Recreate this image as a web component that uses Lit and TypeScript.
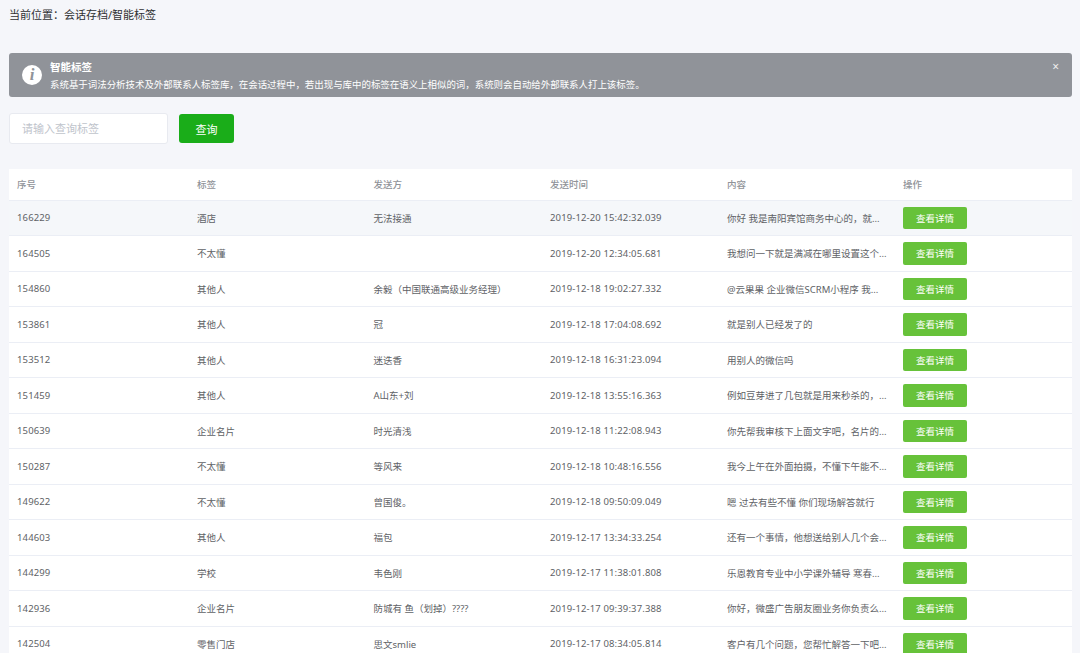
import { html, css, LitElement } from 'lit';
import { customElement } from 'lit/decorators.js';

// full-width punctuation, written as escapes so it can't get flattened to ascii
const C = '\uFF0C';
const COLON = '\uFF1A';
const LP = '\uFF08';
const RP = '\uFF09';

const crumb = `当前位置${COLON}会话存档/智能标签`;
const desc = `系统基于词法分析技术及外部联系人标签库${C}在会话过程中${C}若出现与库中的标签在语义上相似的词${C}系统则会自动给外部联系人打上该标签。`;

const rows = [
  ['166229', '酒店', '无法接通', '2019-12-20 15:42:32.039', `你好 我是南阳宾馆商务中心的${C}就...`],
  ['164505', '不太懂', '', '2019-12-20 12:34:05.681', '我想问一下就是满减在哪里设置这个...'],
  ['154860', '其他人', `余毅${LP}中国联通高级业务经理${RP}`, '2019-12-18 19:02:27.332', '@云果果 企业微信SCRM小程序 我...'],
  ['153861', '其他人', '冠', '2019-12-18 17:04:08.692', '就是别人已经发了的'],
  ['153512', '其他人', '迷迭香', '2019-12-18 16:31:23.094', '用别人的微信吗'],
  ['151459', '其他人', 'A山东+刘', '2019-12-18 13:55:16.363', `例如豆芽进了几包就是用来秒杀的${C}...`],
  ['150639', '企业名片', '时光清浅', '2019-12-18 11:22:08.943', `你先帮我审核下上面文字吧${C}名片的...`],
  ['150287', '不太懂', '等风来', '2019-12-18 10:48:16.556', `我今上午在外面拍摄${C}不懂下午能不...`],
  ['149622', '不太懂', '曾国俊。', '2019-12-18 09:50:09.049', '嗯 过去有些不懂 你们现场解答就行'],
  ['144603', '其他人', '福包', '2019-12-17 13:34:33.254', `还有一个事情${C}他想送给别人几个会...`],
  ['144299', '学校', '韦色刚', '2019-12-17 11:38:01.808', '乐恩教育专业中小学课外辅导 寒春...'],
  ['142936', '企业名片', `防城有 鱼${LP}划掉${RP}????`, '2019-12-17 09:39:37.388', `你好${C}微盛广告朋友圈业务你负责么...`],
  ['142504', '零售门店', '思文smlie', '2019-12-17 08:34:05.814', `客户有几个问题${C}您帮忙解答一下吧...`],
];

@customElement('app-root')
export class AppRoot extends LitElement {
  render() {
    return html`
      <div class="crumb">${crumb}</div>

      <section class="alert">
        <span class="alert-icon">i</span>
        <div class="alert-body">
          <div class="alert-title">智能标签</div>
          <div class="alert-desc">${desc}</div>
        </div>
        <span class="alert-close">×</span>
      </section>

      <form class="search">
        <input class="search-input" placeholder="请输入查询标签" />
        <button class="search-btn" type="button">查询</button>
      </form>

      <section class="table">
        <div class="row head">
          <div>序号</div>
          <div>标签</div>
          <div>发送方</div>
          <div>发送时间</div>
          <div>内容</div>
          <div>操作</div>
        </div>
        ${rows.map(
          (r, i) => html`
            <div class="row ${i === 0 ? 'hover' : ''}">
              ${r.map(c => html`<div>${c}</div>`)}
              <div><button class="detail" type="button">查看详情</button></div>
            </div>
          `
        )}
      </section>
    `;
  }

  static styles = css`
    :host {
      display: block;
      height: 653px;
      overflow: hidden;
      box-sizing: border-box;
      padding: 0 8px 0 9px;
      background: #f5f6fa;
      font-family: 'Noto Sans', 'Noto Sans CJK SC', sans-serif;
      color: #606266;
    }

    .crumb {
      height: 53px;
      padding-top: 7px;
      box-sizing: border-box;
      font-size: 11px;
      line-height: 16px;
      color: #303133;
    }

    .alert {
      position: relative;
      display: flex;
      align-items: center;
      gap: 8px;
      height: 44px;
      padding-left: 13px;
      box-sizing: border-box;
      border-radius: 3px;
      background: #909399;
      color: #fff;
    }

    .alert-icon {
      flex: none;
      width: 20px;
      height: 20px;
      border-radius: 50%;
      background: #fff;
      color: #909399;
      font: italic bold 17px/20px 'Liberation Serif', serif;
      text-align: center;
    }

    .alert-body {
      padding-top: 2px;
    }

    .alert-title {
      font-size: 10.5px;
      font-weight: 700;
      line-height: 16px;
      margin-top: -1px;
    }

    .alert-desc {
      font-size: 9.45px;
      line-height: 14px;
      margin-top: 3px;
    }

    .alert-close {
      position: absolute;
      top: 7px;
      right: 13px;
      font-size: 12px;
      line-height: 14px;
      color: #eee;
    }

    .search {
      display: flex;
      align-items: center;
      gap: 12px;
      height: 31px;
      margin: 16px 0 25px;
    }

    .search-input {
      width: 159px;
      height: 31px;
      padding: 0 12px;
      box-sizing: border-box;
      border: 1px solid #e8eaf0;
      border-radius: 3px;
      background: #fff;
      font: inherit;
      font-size: 11px;
      outline: none;
    }

    .search-input::placeholder {
      color: #c0c4cc;
    }

    .search-btn {
      width: 55px;
      height: 29px;
      margin-left: -1px;
      padding: 0;
      border: 0;
      border-radius: 3px;
      background: #1aad19;
      color: #fff;
      font: inherit;
      font-size: 11px;
    }

    .table {
      background: #fff;
    }

    .row {
      display: grid;
      grid-template-columns: 180px 176.5px 176.5px 177px 176px 1fr;
      align-items: center;
      height: 35.5px;
      box-sizing: border-box;
      border-bottom: 1px solid #ebeef5;
      font-size: 9.5px;
    }

    .row > div {
      padding-left: 8px;
      white-space: nowrap;
      overflow: hidden;
    }

    .row:not(.head) > div:nth-child(1),
    .row:not(.head) > div:nth-child(4) {
      letter-spacing: 0.13px;
    }

    .head {
      height: 31.5px;
      color: #909399;
      font-weight: 500;
    }

    .hover {
      background: #f5f7fa;
    }

    .detail {
      display: block;
      width: 64px;
      height: 22.5px;
      padding: 0;
      border: 0;
      border-radius: 2px;
      background: #67c23a;
      color: #fff;
      font: inherit;
      font-size: 9.5px;
    }
  `;
}
